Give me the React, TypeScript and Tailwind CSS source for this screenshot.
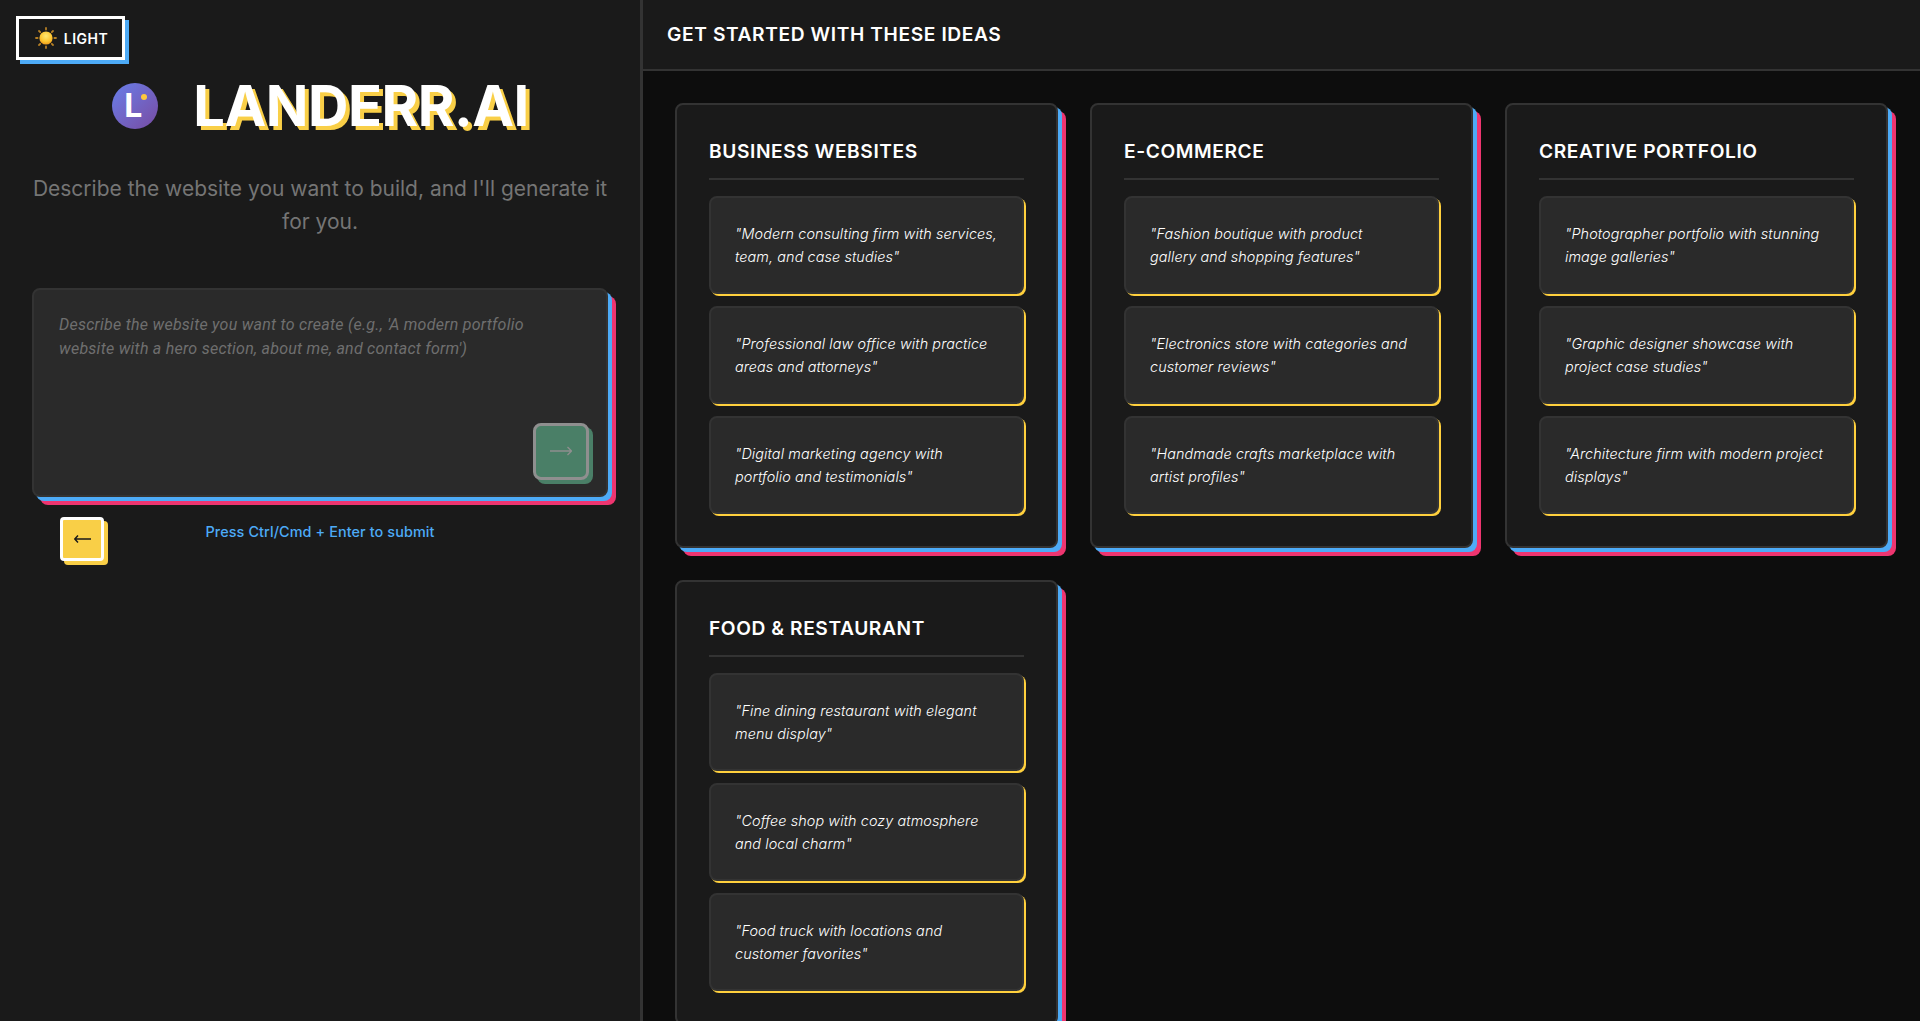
const ideaGroups = [
  {
    title: 'BUSINESS WEBSITES',
    ideas: [
      '"Modern consulting firm with services, team, and case studies"',
      '"Professional law office with practice areas and attorneys"',
      '"Digital marketing agency with portfolio and testimonials"',
    ],
  },
  {
    title: 'E-COMMERCE',
    ideas: [
      '"Fashion boutique with product\ngallery and shopping features"',
      '"Electronics store with categories and customer reviews"',
      '"Handmade crafts marketplace with artist profiles"',
    ],
  },
  {
    title: 'CREATIVE PORTFOLIO',
    ideas: [
      '"Photographer portfolio with stunning image galleries"',
      '"Graphic designer showcase with project case studies"',
      '"Architecture firm with modern project displays"',
    ],
  },
  {
    title: 'FOOD & RESTAURANT',
    ideas: [
      '"Fine dining restaurant with elegant menu display"',
      '"Coffee shop with cozy atmosphere and local charm"',
      '"Food truck with locations and customer favorites"',
    ],
  },
];

function SunIcon() {
  return (
    <svg width="22" height="22" viewBox="0 0 22 22">
      <defs>
        <radialGradient id="sunBody" cx="50%" cy="35%" r="65%">
          <stop offset="0%" stopColor="#ffe873" />
          <stop offset="65%" stopColor="#fdc52f" />
          <stop offset="100%" stopColor="#ee9a1c" />
        </radialGradient>
      </defs>
      <g stroke="#b57f25" strokeWidth="1.8" strokeLinecap="round">
        <path d="M11 1V2.6M11 19.4V21M1 11h1.6M19.4 11H21M4 4l1.2 1.2M16.8 16.8 18 18M4 18l1.2-1.2M16.8 5.2 18 4" />
      </g>
      <circle cx="11" cy="11" r="6.6" fill="url(#sunBody)" />
    </svg>
  );
}

function IdeaCard({ title, ideas }: { title: string; ideas: string[] }) {
  return (
    <div className="bg-[#1a1a1a] border-2 border-[#333333] rounded-lg p-8 shadow-[4px_4px_0_#4dabf7,8px_8px_0_#ee3570]">
      <h3 className="text-[19.2px] leading-[29px] font-semibold tracking-[0.58px] text-white pb-3 mb-4 border-b-2 border-[#333333]">
        {title}
      </h3>
      <div className="flex flex-col gap-3">
        {ideas.map((idea) => (
          <div
            key={idea}
            className="bg-[#2a2a2a] border-2 border-[#333333] rounded-lg p-6 text-[14.4px] leading-[23px] italic font-light tracking-[0.1px] whitespace-pre-line text-white shadow-[2px_2px_0_#ffd03d]"
          >
            {idea}
          </div>
        ))}
      </div>
    </div>
  );
}

export default function App() {
  return (
    <div className="flex h-screen overflow-hidden bg-[#0d0d0d] font-['Inter',sans-serif]">
      <div className="relative w-[643px] shrink-0 bg-[#1a1a1a] border-r-[3px] border-[#333333] px-8 pt-[72px]">
        <button className="absolute top-4 left-4 w-[109px] h-[44px] flex items-center justify-center gap-[7px] pl-[2px] bg-[#1a1a1a] border-[3px] border-white shadow-[4px_4px_0_#4dabf7] text-white text-[14px] font-semibold tracking-[0.5px]">
          <SunIcon />
          LIGHT
        </button>

        <div className="flex items-center justify-center gap-[35px] h-[68px] pl-px">
          <div className="relative w-[46px] h-[46px] rounded-full bg-gradient-to-br from-[#667eea] to-[#764ba2] flex items-center justify-center text-white text-[32px] leading-none font-bold">
            <span className="-ml-1">L</span>
            <span className="absolute top-[11px] right-[11px] w-[6px] h-[6px] rounded-full bg-[#ffc83d]" />
          </div>
          <h1 className="text-[56px] leading-[68px] font-bold tracking-[-0.5px] text-white [text-shadow:4px_4px_0_#f9cf47]">
            LANDERR.AI
          </h1>
        </div>

        <p className="mt-8 text-[21px] leading-[33.3px] text-center text-[#757575]">
          Describe the website you want to build, and I'll generate it for you.
        </p>

        <div className="mt-[49.4px] relative h-[209px] bg-[#2a2a2a] border-2 border-[#333333] rounded-lg shadow-[4px_4px_0_#4dabf7,8px_8px_0_#ee3570] pl-[25px] pr-10 pt-[23px] flex flex-col">
          <textarea
            className="flex-1 bg-transparent resize-none outline-none font-['Roboto',sans-serif] italic text-[16px] tracking-[0.25px] leading-[24.4px] text-white placeholder:text-[#6f6f6f]"
            placeholder="Describe the website you want to create (e.g., 'A modern portfolio website with a hero section, about me, and contact form')"
          />
          <button className="absolute right-[17px] bottom-[15px] w-[56px] h-[57px] flex items-center justify-center bg-[#4a7f67] border-[3px] border-[#8f8f8f] rounded-lg shadow-[4px_4px_0_#4a7f67]">
            <svg width="22" height="10" viewBox="0 0 22 10" fill="none" stroke="#8f8f8f" strokeWidth="1.3">
              <path d="M0 5h21M17.5 1 21.5 5l-4 4" />
            </svg>
          </button>
        </div>

        <div className="mt-5 grid grid-cols-[1fr_auto_1fr] items-start">
          <button className="ml-7 justify-self-start w-[44px] h-[44px] flex items-center justify-center bg-[#f9cf47] border-[3px] border-white rounded-[4px] shadow-[4px_4px_0_#f9cf47]">
            <svg width="17" height="8" viewBox="0 0 17 8" fill="none" stroke="#1a1a1a" strokeWidth="1.4">
              <path d="M17 4H1M4 .5 .8 4 4 7.5" />
            </svg>
          </button>
          <span className="text-[14.4px] leading-[30px] font-medium tracking-[0.1px] text-[#4dabf7]">
            Press Ctrl/Cmd + Enter to submit
          </span>
        </div>
      </div>

      <div className="flex-1 min-w-0 flex flex-col">
        <div className="h-[71px] shrink-0 flex items-center px-6 bg-[#1a1a1a] border-b-2 border-[#333333]">
          <h2 className="text-[19.2px] font-semibold tracking-[0.6px] text-white">GET STARTED WITH THESE IDEAS</h2>
        </div>
        <div className="p-8 grid grid-cols-3 gap-8 items-start">
          {ideaGroups.map((group) => (
            <IdeaCard key={group.title} title={group.title} ideas={group.ideas} />
          ))}
        </div>
      </div>
    </div>
  );
}
